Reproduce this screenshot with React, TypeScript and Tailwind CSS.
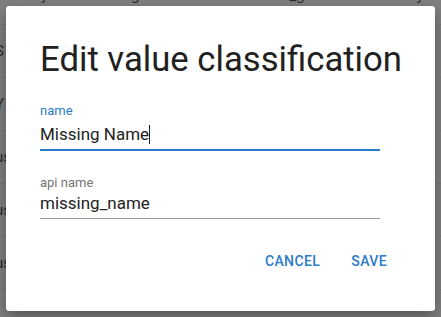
import React from "react";

const rows = ["S", "Y", "us", "us", "us", ""];

export default function App() {
  return (
    <div
      className="relative w-[441px] h-[317px] overflow-hidden bg-[#808080]"
      style={{ fontFamily: "Roboto, 'Liberation Sans', sans-serif" }}
    >
      {/* dimmed page behind the dialog */}
      <div className="flex flex-col text-[#2a2a2a]">
        <div className="h-[25px] border-b border-[#757575] relative overflow-hidden">
          <div className="flex text-[15px] leading-none -mt-[12px]">
            <span className="ml-[41px]">y</span>
            <span className="ml-[83px]">g</span>
            <span className="ml-[150px]">_g</span>
            <span className="ml-[112px]">y</span>
          </div>
        </div>
        {rows.map((t, i) => (
          <div
            key={i}
            className="h-[53px] border-b border-[#757575] flex items-center overflow-hidden"
          >
            <span className="text-[15px] -ml-[5px] leading-none">{t}</span>
          </div>
        ))}
      </div>

      {/* dialog */}
      <div className="absolute left-[6px] top-[6px] w-[429px] h-[305px] bg-white rounded-[3px] shadow-[0_6px_16px_rgba(0,0,0,0.35)] flex flex-col pl-[34px] pr-[20px]">
        <h2 className="text-[34.7px] leading-[40px] text-[#212121] font-normal mt-[33px] whitespace-nowrap">
          Edit value classification
        </h2>

        <div className="mt-[24px] flex flex-col w-[340px]">
          <label className="text-[13px] leading-[15px] text-[#2a7bc8]">name</label>
          <div className="mt-[6px] border-b-2 border-[#2a7bc8] pb-[5px] text-[17px] leading-[20px] text-[#212121] flex items-center">
            <span>Missing Name</span>
            <span className="inline-block w-px h-[19px] bg-[#212121]" />
          </div>
        </div>

        <div className="mt-[24px] flex flex-col w-[340px]">
          <label className="text-[13px] leading-[15px] text-[#757575]">api name</label>
          <div className="mt-[3px] border-b border-[#9e9e9e] pb-[5px] text-[17px] leading-[20px] text-[#212121]">
            missing_name
          </div>
        </div>

        <div className="mt-auto mb-[42px] flex justify-end gap-[31px] mr-[28px]">
          <button className="text-[14px] leading-[16px] font-medium text-[#2a7bc8] tracking-[0.4px]">
            CANCEL
          </button>
          <button className="text-[14px] leading-[16px] font-medium text-[#2a7bc8] tracking-[0.4px]">
            SAVE
          </button>
        </div>
      </div>
    </div>
  );
}
